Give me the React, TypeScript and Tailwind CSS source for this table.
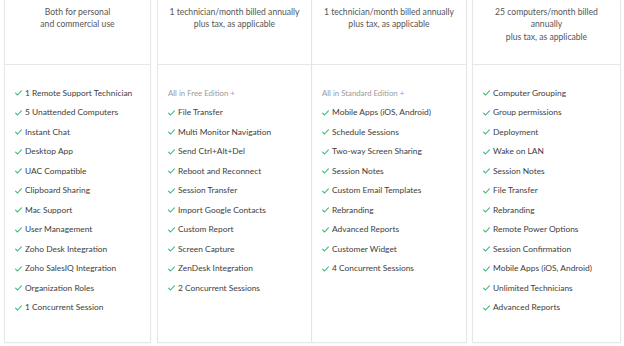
import React from 'react';

type Plan = {
  header: string[];
  lead?: string;
  items: string[];
  width: string;
  extra: string;
};

const plans: Plan[] = [
  {
    header: ['Both for personal', 'and commercial use'],
    items: [
      '1 Remote Support Technician',
      '5 Unattended Computers',
      'Instant Chat',
      'Desktop App',
      'UAC Compatible',
      'Clipboard Sharing',
      'Mac Support',
      'User Management',
      'Zoho Desk Integration',
      'Zoho SalesIQ Integration',
      'Organization Roles',
      '1 Concurrent Session',
    ],
    width: 'w-[147px]',
    extra: '',
  },
  {
    header: ['1 technician/month billed annually', 'plus tax, as applicable'],
    lead: 'All in Free Edition +',
    items: [
      'File Transfer',
      'Multi Monitor Navigation',
      'Send Ctrl+Alt+Del',
      'Reboot and Reconnect',
      'Session Transfer',
      'Import Google Contacts',
      'Custom Report',
      'Screen Capture',
      'ZenDesk Integration',
      '2 Concurrent Sessions',
    ],
    width: 'w-[155px]',
    extra: 'ml-[6px]',
  },
  {
    header: ['1 technician/month billed annually', 'plus tax, as applicable'],
    lead: 'All in Standard Edition +',
    items: [
      'Mobile Apps (iOS, Android)',
      'Schedule Sessions',
      'Two-way Screen Sharing',
      'Session Notes',
      'Custom Email Templates',
      'Rebranding',
      'Advanced Reports',
      'Customer Widget',
      '4 Concurrent Sessions',
    ],
    width: 'w-[155px]',
    extra: 'border-l-0',
  },
  {
    header: ['25 computers/month billed', 'annually', 'plus tax, as applicable'],
    items: [
      'Computer Grouping',
      'Group permissions',
      'Deployment',
      'Wake on LAN',
      'Session Notes',
      'File Transfer',
      'Rebranding',
      'Remote Power Options',
      'Session Confirmation',
      'Mobile Apps (iOS, Android)',
      'Unlimited Technicians',
      'Advanced Reports',
    ],
    width: 'w-[149px]',
    extra: 'ml-[5px]',
  },
];

const Check = () => (
  <svg width="7" height="6" viewBox="0 0 7 6" className="shrink-0">
    <path d="M0.6 3.2 L2.5 5 L6.4 0.8" fill="none" stroke="#3dba7a" strokeWidth="1.1" strokeLinecap="round" strokeLinejoin="round" />
  </svg>
);

export default function App() {
  return (
    <div
      className="w-[624px] h-[346px] bg-white overflow-hidden flex pl-[4px]"
      style={{ fontFamily: 'Lato, "Open Sans", sans-serif' }}
    >
      {plans.map((p, i) => (
        <div
          key={i}
          className={`${p.width} ${p.extra} h-[343px] border border-t-0 border-[#e7e7e7] shadow-[0_1px_2px_rgba(0,0,0,0.04)] flex flex-col shrink-0`}
        >
          <div className="h-[65px] border-b border-[#e7e7e7] pt-[6px] text-center text-[8.6px] leading-[12.4px] text-[#555555]">
            {p.header.map((h) => (
              <div key={h}>{h}</div>
            ))}
          </div>
          <ul className="pt-[18.5px] pl-[10px]">
            {p.lead && (
              <li className="leading-[19.5px] text-[7.8px] text-[#9a9a9a]">{p.lead}</li>
            )}
            {p.items.map((it) => (
              <li key={it} className="flex items-center gap-[3px] leading-[19.5px] text-[8.4px] text-[#404040] whitespace-nowrap">
                <Check />
                <span>{it}</span>
              </li>
            ))}
          </ul>
        </div>
      ))}
    </div>
  );
}
